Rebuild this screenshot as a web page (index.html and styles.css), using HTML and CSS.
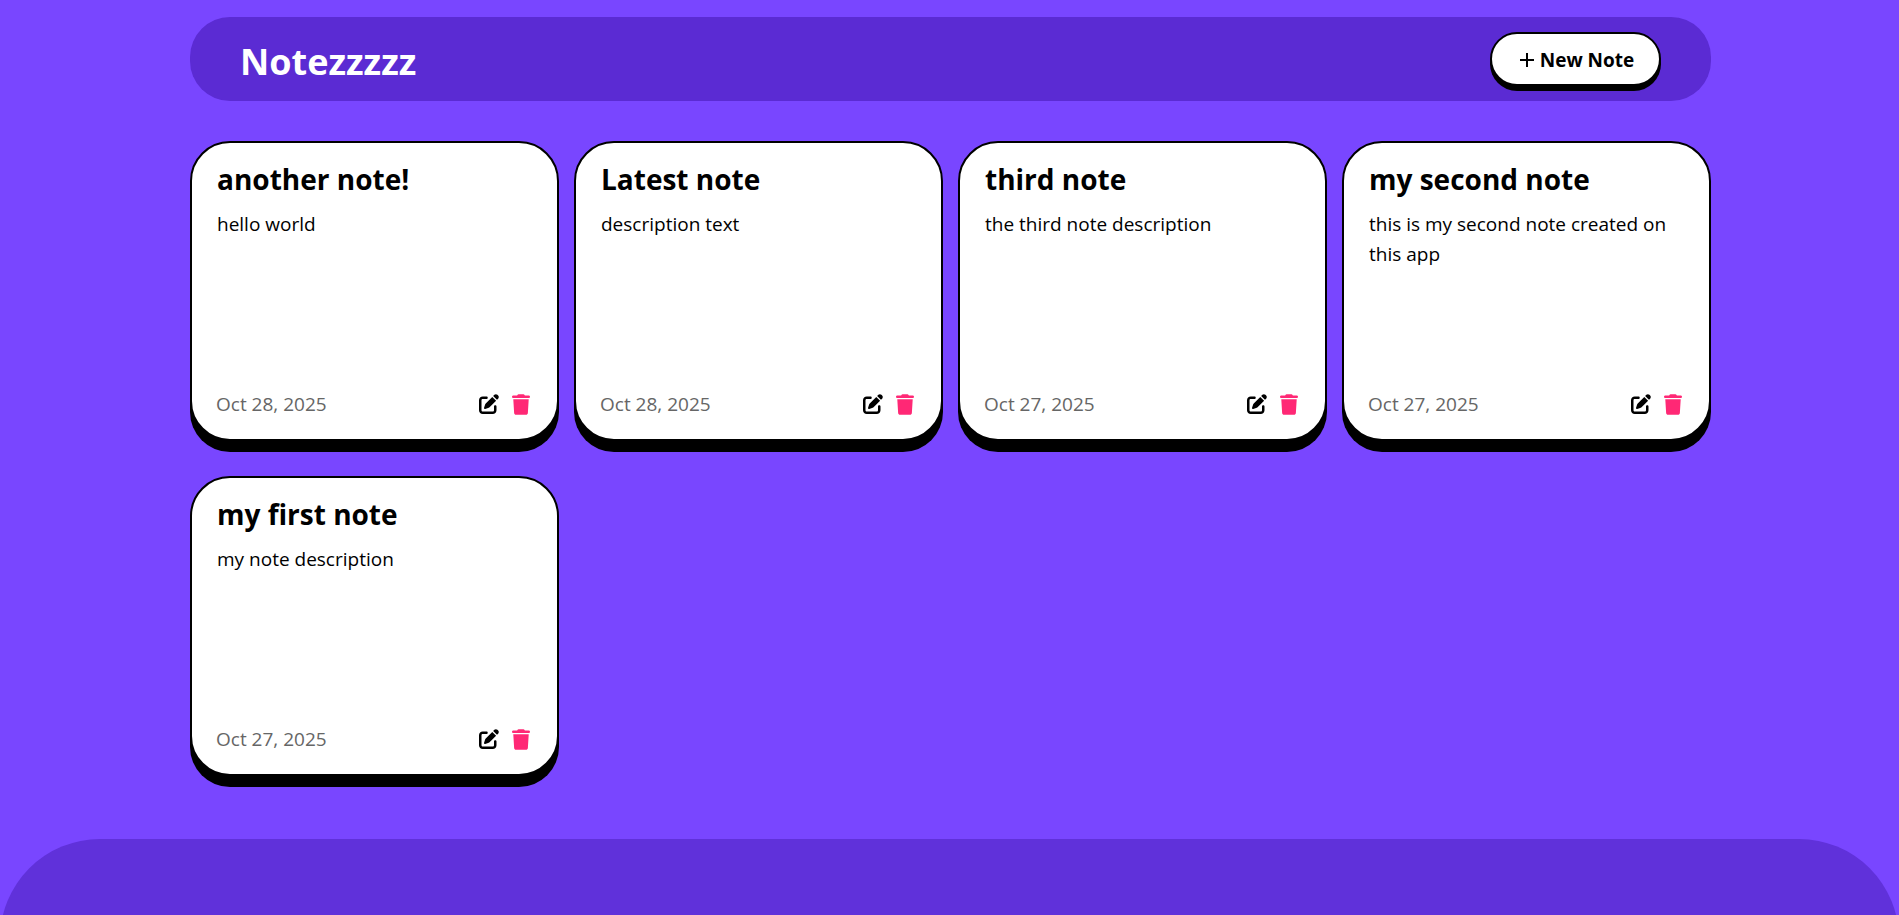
FILE: index.html
```html
<!DOCTYPE html>
<html lang="en">
<head>
<meta charset="utf-8">
<title>Notezzzzz</title>
<link rel="stylesheet" href="styles.css">
</head>
<body>
<svg class="sprite" aria-hidden="true">
  <symbol id="edit" viewBox="0 0 512 512"><path d="M471.600 21.700c-21.900-21.900-57.300-21.900-79.200 0L362.300 51.700l97.900 97.900 30.100-30.100c21.900-21.900 21.900-57.300 0-79.200L471.600 21.700zM172.400 241.700c-6.100 6.100-10.800 13.600-13.500 21.900l-29.600 88.800c-2.900 8.600-.6 18.100 5.800 24.600s15.900 8.700 24.600 5.800l88.800-29.600c8.200-2.700 15.700-7.400 21.900-13.500L437.700 172.300 339.700 74.300 172.400 241.700z"/><path d="M96 64C43 64 0 107 0 160V416c0 53 43 96 96 96H352c53 0 96-43 96-96V320c0-17.700-14.300-32-32-32s-32 14.300-32 32v96c0 17.700-14.300 32-32 32H96c-17.700 0-32-14.300-32-32V160c0-17.700 14.300-32 32-32h96c17.700 0 32-14.300 32-32s-14.300-32-32-32H96z"/></symbol>
  <symbol id="trash" viewBox="0 0 448 512"><path d="M135.200 17.700L128 32H32C14.300 32 0 46.300 0 64S14.300 96 32 96H416c17.700 0 32-14.300 32-32s-14.300-32-32-32H320l-7.200-14.300C307.400 6.800 296.300 0 284.200 0H163.800c-12.100 0-23.200 6.800-28.600 17.700zM416 128H32L53.200 467c1.600 25.300 22.600 45 47.900 45H346.900c25.300 0 46.300-19.700 47.900-45L416 128z"/></symbol>
</svg>
<div class="page">
  <header class="topbar">
    <h1 class="logo">Notezzzzz</h1>
    <button class="new-note" type="button">
      <svg class="plus" viewBox="0 0 14 14" aria-hidden="true"><path d="M7 0v14M0 7h14"/></svg>
      <span>New Note</span>
    </button>
  </header>
  <main class="notes">
    <article class="note">
      <h2 class="note-title">another note!</h2>
      <p class="note-text">hello world</p>
      <footer class="note-foot"><time>Oct 28, 2025</time><button class="icon-btn" type="button" aria-label="Edit"><svg class="edit"><use href="#edit"/></svg></button><button class="icon-btn" type="button" aria-label="Delete"><svg class="trash"><use href="#trash"/></svg></button></footer>
    </article>
    <article class="note">
      <h2 class="note-title">Latest note</h2>
      <p class="note-text">description text</p>
      <footer class="note-foot"><time>Oct 28, 2025</time><button class="icon-btn" type="button" aria-label="Edit"><svg class="edit"><use href="#edit"/></svg></button><button class="icon-btn" type="button" aria-label="Delete"><svg class="trash"><use href="#trash"/></svg></button></footer>
    </article>
    <article class="note">
      <h2 class="note-title">third note</h2>
      <p class="note-text">the third note description</p>
      <footer class="note-foot"><time>Oct 27, 2025</time><button class="icon-btn" type="button" aria-label="Edit"><svg class="edit"><use href="#edit"/></svg></button><button class="icon-btn" type="button" aria-label="Delete"><svg class="trash"><use href="#trash"/></svg></button></footer>
    </article>
    <article class="note">
      <h2 class="note-title">my second note</h2>
      <p class="note-text">this is my second note created on this app</p>
      <footer class="note-foot"><time>Oct 27, 2025</time><button class="icon-btn" type="button" aria-label="Edit"><svg class="edit"><use href="#edit"/></svg></button><button class="icon-btn" type="button" aria-label="Delete"><svg class="trash"><use href="#trash"/></svg></button></footer>
    </article>
    <article class="note">
      <h2 class="note-title">my first note</h2>
      <p class="note-text">my note description</p>
      <footer class="note-foot"><time>Oct 27, 2025</time><button class="icon-btn" type="button" aria-label="Edit"><svg class="edit"><use href="#edit"/></svg></button><button class="icon-btn" type="button" aria-label="Delete"><svg class="trash"><use href="#trash"/></svg></button></footer>
    </article>
  </main>
</div>
<div class="bottom"></div>
</body>
</html>
```
FILE: styles.css
```css
* { box-sizing: border-box; margin: 0; }
html { height: 100%; }
body {
  display: flex;
  flex-direction: column;
  height: 100%;
  overflow: hidden;
  background: #7946ff;
  color: #000;
  font-family: "Segoe UI", "Open Sans", "Noto Sans", sans-serif;
  font-size: 19px;
}
.sprite { position: absolute; width: 0; height: 0; }
.page {
  display: flex;
  flex-direction: column;
  flex: none;
  gap: 40px;
  padding: 17px 188px 63px 190px;
}
.topbar {
  display: flex;
  align-items: center;
  justify-content: space-between;
  height: 84px;
  padding: 0 50px;
  border-radius: 40px;
  background: #5b2bd3;
}
.logo { color: #fff; font-size: 36px; line-height: 48px; padding-top: 6px; }
.new-note {
  display: flex;
  align-items: center;
  justify-content: center;
  gap: 6px;
  width: 171px;
  height: 54px;
  padding: 2px 0 0 3px;
  border: 2px solid #000;
  border-radius: 27px;
  box-shadow: 0 5px #000;
  background: #fff;
  color: #000;
  font: inherit;
  font-weight: 700;
}
.plus { width: 14px; height: 14px; stroke: #000; stroke-width: 2; fill: none; }
.notes {
  display: grid;
  grid-template-columns: repeat(4, 1fr);
  gap: 35px 15px;
}
.note {
  display: flex;
  flex-direction: column;
  height: 300px;
  padding: 16px 27px 20px 24px;
  border: 2px solid #000;
  border-radius: 40px;
  box-shadow: 0 11px #000;
  background: #fff;
}
.note-title { padding-left: 1px; font-size: 28px; line-height: 40px; }
.note-text { margin-top: 10px; padding-left: 1px; line-height: 30px; }
.note-foot { display: flex; align-items: center; margin-top: auto; line-height: 30px; color: #666; }
.note-foot time { margin-right: auto; }
.icon-btn { display: flex; padding: 0; border: 0; background: none; }
.icon-btn + .icon-btn { margin-left: 13px; }
.edit { width: 20px; height: 20px; fill: #000; }
.trash { width: 18px; height: 21px; fill: #ff2875; }
.bottom { flex: none; height: 120px; border-radius: 100px 100px 0 0; background: #6031da; }
```
